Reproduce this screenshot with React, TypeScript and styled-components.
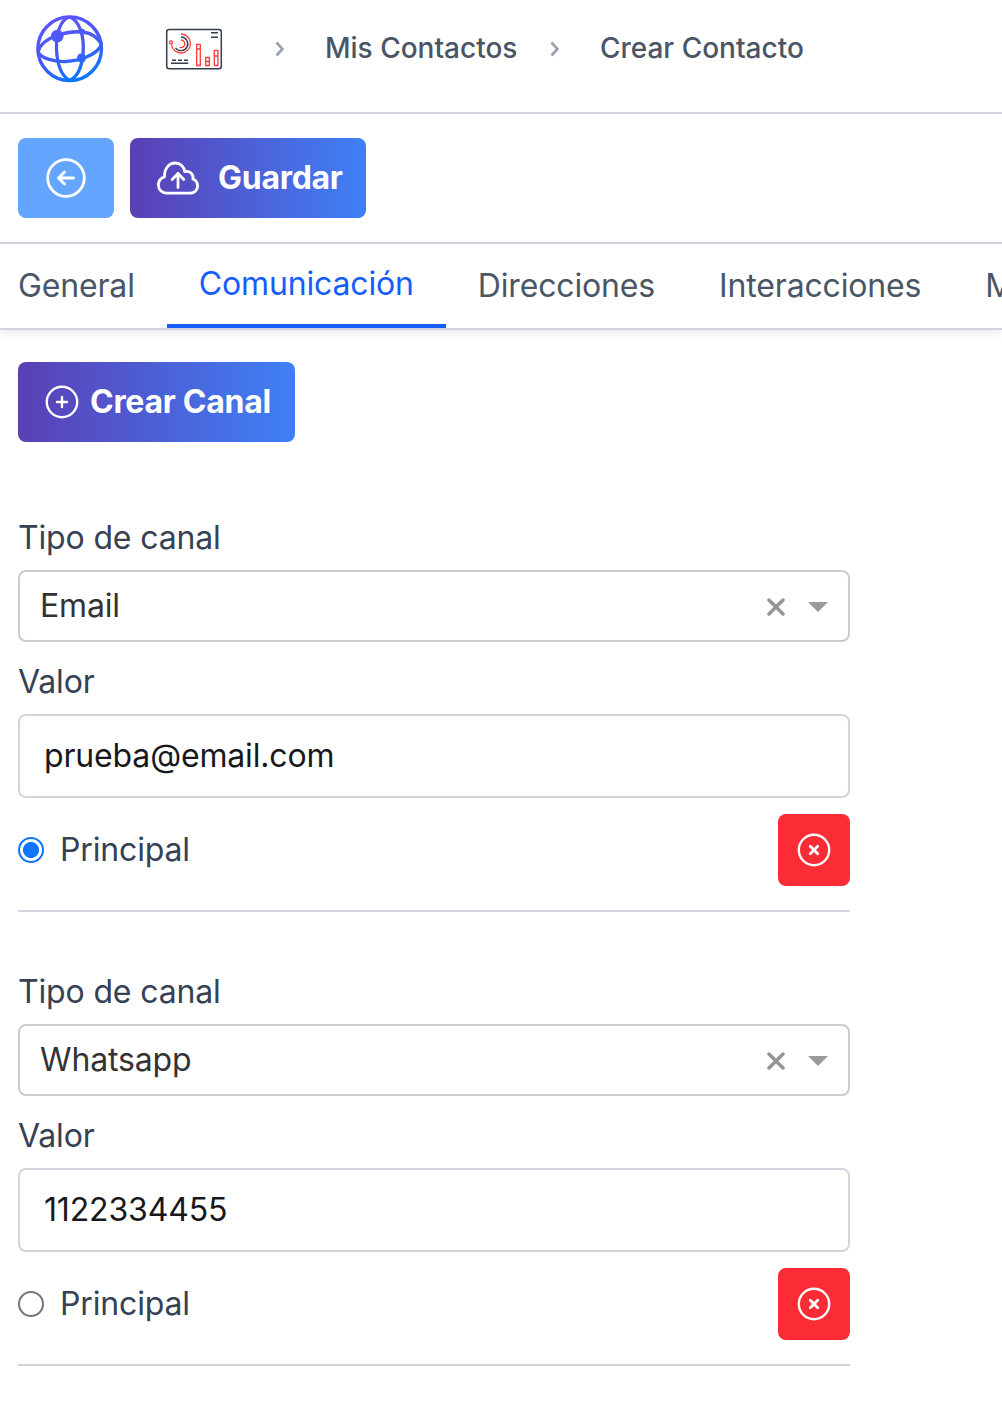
import React, { useState } from 'react';
import styled, { createGlobalStyle, css } from 'styled-components';

const GlobalStyle = createGlobalStyle`
  *, *::before, *::after { box-sizing: border-box; }
  body {
    margin: 0;
    background: #fff;
    overflow: hidden;
    font-family: Inter, "Liberation Sans", sans-serif;
    font-size: 32px;
    line-height: 48px;
    letter-spacing: -0.155px;
    color: #364153;
  }
  button, input { font: inherit; letter-spacing: inherit; }
  svg { display: block; flex: none; }
`;

const Page = styled.div`
  height: 1410px;
  overflow: hidden;
`;

const Header = styled.header`
  display: flex;
  align-items: center;
  height: 114px;
  padding: 0 0 14px 35px;
  border-bottom: 2px solid #d1d5de;
`;

const Logo = styled.a`
  margin-right: 60px;
`;

const Breadcrumbs = styled.nav`
  display: flex;
  align-items: center;
`;

const Crumb = styled.a`
  font-size: 28px;
  line-height: 40px;
  font-weight: 500;
  letter-spacing: 0;
  padding-bottom: 2px;
  color: #4a5565;
  white-space: nowrap;
`;

const Separator = styled.span<{ $before: number; $after: number }>`
  margin-left: ${(p) => p.$before}px;
  margin-right: ${(p) => p.$after}px;
`;

const Toolbar = styled.div`
  display: flex;
  align-items: center;
  gap: 16px;
  height: 130px;
  padding: 0 18px;
  border-bottom: 2px solid #d1d5de;
`;

const BaseButton = styled.button`
  display: flex;
  align-items: center;
  height: 80px;
  padding: 0;
  border: 0;
  border-radius: 8px;
  color: #fff;
  font-weight: 700;
  letter-spacing: -0.28px;
  white-space: nowrap;
`;

const BackButton = styled(BaseButton)`
  justify-content: center;
  width: 96px;
  background: #64a5ff;
`;

const PrimaryButton = styled(BaseButton)<{ $width: number; $gap: number; $start: number }>`
  width: ${(p) => p.$width}px;
  gap: ${(p) => p.$gap}px;
  padding-left: ${(p) => p.$start}px;
  background: linear-gradient(to right, #5b3fb5, #3f80f6);
`;

const Tabs = styled.nav`
  display: flex;
  height: 86px;
  border-bottom: 2px solid #d1d5de;
  box-shadow: 0 2px 8px rgba(0, 0, 0, 0.1);
`;

const Tab = styled.a<{ $active?: boolean }>`
  display: flex;
  align-items: center;
  flex: none;
  height: 84px;
  padding: 0 32px;
  color: #4a5565;
  &:first-child { padding-left: 18px; }
  ${(p) =>
    p.$active &&
    css`
      color: #155dfc;
      border-bottom: 4px solid #155dfc;
    `}
`;

const Content = styled.main`
  padding: 32px 18px 0;
`;

const Channel = styled.section`
  display: flex;
  flex-direction: column;
  width: 832px;
  height: 454px;
  padding-top: 56px;
  border-bottom: 2px solid #d1d5de;
`;

const Channels = styled.div`
  padding-top: 16px;
`;

const Label = styled.label`
  height: 48px;
  margin-bottom: 8px;
`;

const Select = styled.div`
  display: flex;
  align-items: center;
  height: 72px;
  margin-bottom: 16px;
  padding: 0 20px;
  border: 2px solid #ccc;
  border-radius: 8px;
  color: #333;
`;

const SelectValue = styled.span`
  flex: 1;
`;

const SelectIcons = styled.span`
  display: flex;
  align-items: center;
  gap: 23px;
  padding-top: 1px;
`;

const TextInput = styled.input`
  width: 100%;
  height: 84px;
  margin: 0 0 16px;
  padding: 0 24px 2px;
  border: 2px solid #d1d5de;
  border-radius: 8px;
  background: #fff;
  color: #18181b;
  outline: 0;
`;

const ChannelFooter = styled.div`
  display: flex;
  align-items: center;
  justify-content: space-between;
`;

const RadioLabel = styled.label`
  display: flex;
  align-items: center;
  gap: 16px;
`;

const Radio = styled.input`
  appearance: none;
  width: 26px;
  height: 26px;
  margin: 0;
  border: 2px solid #767676;
  border-radius: 50%;
  background: #fff;
  &:checked {
    border-color: #0d75ff;
    background: radial-gradient(circle, #0d75ff 7.6px, #fff 8.4px);
  }
`;

const DeleteButton = styled(BaseButton)`
  justify-content: center;
  width: 72px;
  height: 72px;
  background: #fb2c36;
`;

const GlobeLogo = () => (
  <svg width="70" height="70" viewBox="0 0 70 70" fill="none" stroke="url(#globe)" strokeWidth="3.300">
    <defs>
      <linearGradient id="globe" gradientUnits="userSpaceOnUse" x1="20" y1="5" x2="46" y2="66">
        <stop stopColor="#5b55fb" />
        <stop offset=".5" stopColor="#4759f5" />
        <stop offset="1" stopColor="#0878ff" />
      </linearGradient>
    </defs>
    <circle cx="34.700" cy="34.700" r="31.800" strokeWidth="3.400" />
    <path d="M34.500 3C25 6 21 20 21.500 35c.5 14 4 26 13 31.500M34.500 3C43 6 48 18 48.300 32c.2 18-4.800 31-13.800 34.500" />
    <path d="M3 38C5 30 12 25 22 21.500S52 14 62 24.500C64.500 27 66 29 66.300 31M3 38c3 6 15 10 28 9.500S62 41 66.300 31" />
    <g fill="url(#globe)" stroke="none">
      <circle cx="22.300" cy="22" r="6.300" />
      <circle cx="47" cy="17.800" r="3" />
      <circle cx="46.500" cy="44" r="4.500" />
    </g>
  </svg>
);

const DashboardIcon = () => (
  <svg width="58" height="44" viewBox="0 0 58 44" fill="none">
    <rect x="1.700" y="2.500" width="54.600" height="39.300" rx="2.500" stroke="#343e4d" strokeWidth="1.500" />
    <g stroke="#ff3a3a" strokeWidth="1.300">
      <path d="M16 7a9.500 9.500 0 1 1-9.500 10.500M16 13a3.800 3.800 0 1 1-1.500 7.300" />
      <circle cx="6" cy="15.400" r="1.500" />
      <path d="M31.700 17.300h3.600v21.200h-3.600zM31.700 22h3.600M40.700 30.500h3.600v8h-3.600zM40.700 34.500h3.600M49.300 23.300h3.600v15.200h-3.600zM49.300 29h3.600" />
    </g>
    <path d="M16 10a6.800 6.800 0 1 1-5.500 10.800M46 5.700h7M46 10.300h7M7 33.300h4m2 0h4m2 0h4M6 36.300h17.300" stroke="#343e4d" strokeWidth="1.400" />
  </svg>
);

const ChevronIcon = () => (
  <svg width="10" height="16" viewBox="0 0 10 16" fill="none" stroke="#99a1af" strokeWidth="2.600">
    <path d="m1.500 1.500 6 6.500-6 6.500" />
  </svg>
);

const ArrowCircleIcon = () => (
  <svg width="40" height="40" viewBox="0 0 40 40" fill="none" stroke="#fff" strokeWidth="2.800" strokeLinecap="round" strokeLinejoin="round">
    <circle cx="20" cy="20" r="18.300" />
    <path d="M27.500 20h-15M18.500 14l-6 6 6 6" />
  </svg>
);

const CloudUploadIcon = () => (
  <svg width="44" height="36" viewBox="0 0 44 36" fill="none" stroke="#fff" strokeWidth="2.800" strokeLinecap="round" strokeLinejoin="round">
    <path d="M10.800 33.200C5.900 33.200 2.400 29.500 2.400 24.900c0-3.900 2.300-6.900 6.100-8.100C8.200 9 12.600 3 19.200 3c5.200 0 9 3.600 9.500 8.600 4.800-1.300 9.200 2.500 8.200 7.400 3.100 1.200 4.700 3.800 4.700 7 0 4-3.100 7.200-7.200 7.200z" />
    <path d="M22 27.500v-14M16.200 19.500l5.800-6 5.800 6" />
  </svg>
);

const PlusCircleIcon = () => (
  <svg width="34" height="34" viewBox="0 0 34 34" fill="none" stroke="#fff" strokeWidth="2.400" strokeLinecap="round">
    <circle cx="17" cy="17" r="15.200" />
    <path d="M17 12v10M12 17h10" />
  </svg>
);

const CloseCircleIcon = () => (
  <svg width="34" height="34" viewBox="0 0 34 34" fill="none" stroke="#fff" strokeWidth="2.400" strokeLinecap="round">
    <circle cx="17" cy="17" r="15.200" />
    <path d="m13.300 13.300 7.400 7.400m0-7.400-7.400 7.400" strokeWidth="2.800" />
  </svg>
);

const ClearIcon = () => (
  <svg width="18" height="18" viewBox="0 0 18 18" fill="none" stroke="#949599" strokeWidth="3.500" strokeLinecap="round">
    <path d="m2 2 14 14m0-14L2 16" />
  </svg>
);

const CaretIcon = () => (
  <svg width="20" height="10" viewBox="0 0 20 10">
    <path d="M0 0h20L10 10z" fill="#999" />
  </svg>
);

const tabs = ['General', 'Comunicación', 'Direcciones', 'Interacciones', 'M'];
const channels = [
  { type: 'Email', value: 'prueba@email.com' },
  { type: 'Whatsapp', value: '1122334455' },
];

export default function App() {
  const [main, setMain] = useState(0);

  return (
    <Page>
      <GlobalStyle />
      <Header>
        <Logo><GlobeLogo /></Logo>
        <Breadcrumbs>
          <DashboardIcon />
          <Separator $before={51.5} $after={40.5}><ChevronIcon /></Separator>
          <Crumb>Mis Contactos</Crumb>
          <Separator $before={32.5} $after={40}><ChevronIcon /></Separator>
          <Crumb>Crear Contacto</Crumb>
        </Breadcrumbs>
      </Header>
      <Toolbar>
        <BackButton><ArrowCircleIcon /></BackButton>
        <PrimaryButton $width={236} $gap={18} $start={26}>
          <CloudUploadIcon />
          Guardar
        </PrimaryButton>
      </Toolbar>
      <Tabs>
        {tabs.map((name) => (
          <Tab key={name} $active={name === 'Comunicación'}>{name}</Tab>
        ))}
      </Tabs>
      <Content>
        <PrimaryButton $width={277} $gap={11} $start={27}>
          <PlusCircleIcon />
          Crear Canal
        </PrimaryButton>
        <Channels>
          {channels.map((channel, index) => (
            <Channel key={channel.type}>
              <Label>Tipo de canal</Label>
              <Select>
                <SelectValue>{channel.type}</SelectValue>
                <SelectIcons>
                  <ClearIcon />
                  <CaretIcon />
                </SelectIcons>
              </Select>
              <Label>Valor</Label>
              <TextInput defaultValue={channel.value} />
              <ChannelFooter>
                <RadioLabel>
                  <Radio type="radio" name="principal" checked={main === index} onChange={() => setMain(index)} />
                  Principal
                </RadioLabel>
                <DeleteButton><CloseCircleIcon /></DeleteButton>
              </ChannelFooter>
            </Channel>
          ))}
        </Channels>
      </Content>
    </Page>
  );
}
